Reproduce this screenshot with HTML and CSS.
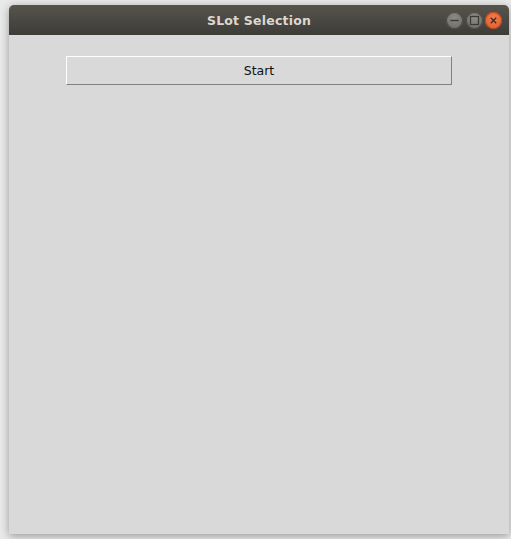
FILE: index.html
```html
<!DOCTYPE html>
<html>
<head>
<meta charset="utf-8">
<link rel="stylesheet" href="styles.css">
<title>SLot Selection</title>
</head>
<body>
<div class="window">
  <div class="titlebar">
    <span class="title">SLot Selection</span>
    <div class="controls">
      <span class="ctl ctl-min"><svg width="17" height="17" viewBox="0 0 17 17"><line x1="4.5" y1="8.5" x2="12.5" y2="8.5" stroke="#3a3935" stroke-width="1.4"/></svg></span>
      <span class="ctl ctl-max"><svg width="17" height="17" viewBox="0 0 17 17"><rect x="4.5" y="4.5" width="8" height="8" fill="none" stroke="#3a3935" stroke-width="1.2"/></svg></span>
      <span class="ctl ctl-close"><svg width="17" height="17" viewBox="0 0 17 17"><path d="M5.8 5.8 L11.2 11.2 M11.2 5.8 L5.8 11.2" stroke="#3a2a22" stroke-width="1.3"/></svg></span>
    </div>
  </div>
  <div class="content">
    <button class="start">Start</button>
  </div>
</div>
</body>
</html>
```
FILE: styles.css
```css
html, body {
  margin: 0;
  padding: 0;
}
body {
  background: #e9e9e9;
  width: 511px;
  height: 539px;
  overflow: hidden;
  padding: 5px 0 0 9px;
  box-sizing: border-box;
}
.window {
  width: 500px;
  height: 529px;
  display: flex;
  flex-direction: column;
  border-radius: 5px 5px 0 0;
  box-shadow: 0 2px 8px rgba(0,0,0,0.35);
  background: #d9d9d9;
}
.titlebar {
  height: 30px;
  flex: none;
  border-radius: 5px 5px 0 0;
  background: linear-gradient(#57544d, #3d3c38);
  display: flex;
  align-items: center;
  justify-content: center;
  position: relative;
}
.title {
  font-family: "DejaVu Sans", sans-serif;
  font-weight: bold;
  font-size: 12.5px;
  color: #dcd8d0;
  letter-spacing: 0.2px;
}
.controls {
  position: absolute;
  right: 7px;
  top: 7px;
  display: flex;
  gap: 2.5px;
}
.ctl {
  width: 17px;
  height: 17px;
  border-radius: 50%;
  display: block;
}
.ctl svg { display: block; }
.ctl-min, .ctl-max {
  background: radial-gradient(circle at 50% 35%, #8c8a84, #6a6863);
  box-shadow: inset 0 0 0 1px #4a4944;
}
.ctl-close {
  background: radial-gradient(circle at 50% 35%, #f27a4d, #e05a26);
  box-shadow: inset 0 0 0 1px #b9481e;
}
.content {
  flex: 1;
  padding: 21px 0 0 57px;
}
.start {
  display: block;
  width: 386px;
  height: 29px;
  margin: 0;
  padding: 0;
  background: #d9d9d9;
  border: 1px solid;
  border-color: #ffffff #808080 #808080 #ffffff;
  font-family: "DejaVu Sans", sans-serif;
  font-size: 12.5px;
  color: #111;
  text-align: center;
}
```
